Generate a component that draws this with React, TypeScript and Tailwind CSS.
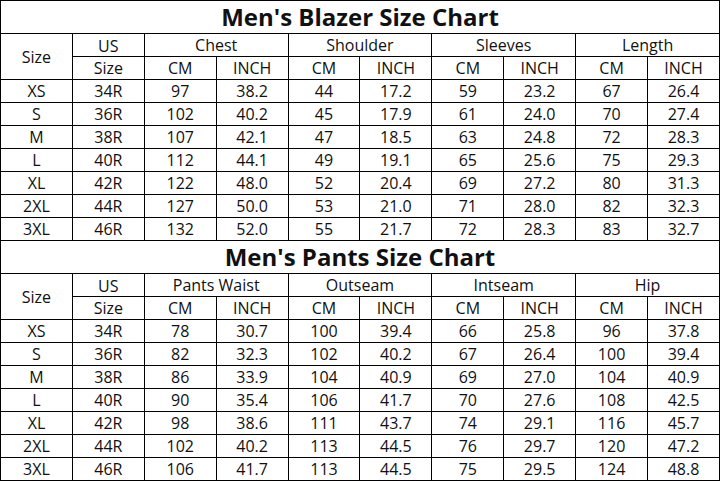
const blazerRows = [
  ['XS', '34R', '97', '38.2', '44', '17.2', '59', '23.2', '67', '26.4'],
  ['S', '36R', '102', '40.2', '45', '17.9', '61', '24.0', '70', '27.4'],
  ['M', '38R', '107', '42.1', '47', '18.5', '63', '24.8', '72', '28.3'],
  ['L', '40R', '112', '44.1', '49', '19.1', '65', '25.6', '75', '29.3'],
  ['XL', '42R', '122', '48.0', '52', '20.4', '69', '27.2', '80', '31.3'],
  ['2XL', '44R', '127', '50.0', '53', '21.0', '71', '28.0', '82', '32.3'],
  ['3XL', '46R', '132', '52.0', '55', '21.7', '72', '28.3', '83', '32.7'],
];

const pantsRows = [
  ['XS', '34R', '78', '30.7', '100', '39.4', '66', '25.8', '96', '37.8'],
  ['S', '36R', '82', '32.3', '102', '40.2', '67', '26.4', '100', '39.4'],
  ['M', '38R', '86', '33.9', '104', '40.9', '69', '27.0', '104', '40.9'],
  ['L', '40R', '90', '35.4', '106', '41.7', '70', '27.6', '108', '42.5'],
  ['XL', '42R', '98', '38.6', '111', '43.7', '74', '29.1', '116', '45.7'],
  ['2XL', '44R', '102', '40.2', '113', '44.5', '76', '29.7', '120', '47.2'],
  ['3XL', '46R', '106', '41.7', '113', '44.5', '75', '29.5', '124', '48.8'],
];

const base = 'border border-black p-0 text-center leading-none';
const cell = `${base} font-normal`;

function ChartSection({
  title,
  groups,
  rows,
}: {
  title: string;
  groups: string[];
  rows: string[][];
}) {
  return (
    <>
      <tr className="h-[33px]">
        <th colSpan={10} className={`${base} text-[24px] font-bold`}>
          {title}
        </th>
      </tr>
      <tr className="h-[23px]">
        <th rowSpan={2} className={cell}>
          Size
        </th>
        <th className={`${cell} pt-[2px]`}>US</th>
        {groups.map((g) => (
          <th key={g} colSpan={2} className={cell}>
            {g}
          </th>
        ))}
      </tr>
      <tr className="h-[23px]">
        <th className={cell}>Size</th>
        {groups.map((g) => (
          <>
            <th key={g + 'cm'} className={cell}>
              CM
            </th>
            <th key={g + 'in'} className={cell}>
              INCH
            </th>
          </>
        ))}
      </tr>
      {rows.map((r) => (
        <tr key={r[0]} className="h-[23px]">
          {r.map((v, i) => (
            <td key={i} className={cell}>
              {v}
            </td>
          ))}
        </tr>
      ))}
    </>
  );
}

export default function App() {
  return (
    <div className="h-[481px] w-[721px] bg-white font-['Open_Sans',sans-serif] text-[16px] text-[#111]">
      <table className="w-[720px] table-fixed border-collapse">
        <tbody>
          <ChartSection
            title="Men's Blazer Size Chart"
            groups={['Chest', 'Shoulder', 'Sleeves', 'Length']}
            rows={blazerRows}
          />
          <ChartSection
            title="Men's Pants Size Chart"
            groups={['Pants Waist', 'Outseam', 'Intseam', 'Hip']}
            rows={pantsRows}
          />
        </tbody>
      </table>
    </div>
  );
}
